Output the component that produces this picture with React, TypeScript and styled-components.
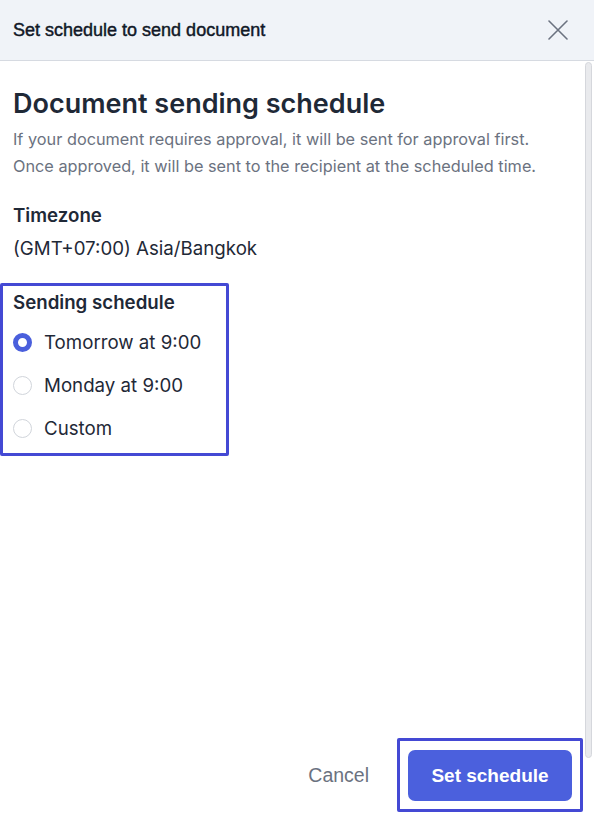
import { useState } from "react";
import styled, { createGlobalStyle } from "styled-components";

const GlobalStyle = createGlobalStyle`
  html, body {
    margin: 0;
    padding: 0;
    background: #ffffff;
  }
  body {
    font-family: Inter, "Noto Sans", "Liberation Sans", sans-serif;
    color: #1f2937;
  }
`;

const Dialog = styled.div`
  position: relative;
  height: 100vh;
  display: flex;
  flex-direction: column;
  background: #ffffff;
  overflow: hidden;
`;

const Header = styled.div`
  height: 60px;
  flex-shrink: 0;
  display: flex;
  align-items: center;
  justify-content: space-between;
  padding: 0 26px 0 13px;
  background: #f0f3f8;
  border-bottom: 1px solid #d6dae1;
`;

const HeaderTitle = styled.h2`
  margin: 0;
  font-family: "Liberation Sans", Arial, sans-serif;
  font-size: 18px;
  font-weight: 400;
  -webkit-text-stroke: 0.45px currentColor;
  color: #111827;
`;

const CloseButton = styled.button`
  border: none;
  background: transparent;
  padding: 0;
  width: 20px;
  height: 20px;
  display: flex;
  align-items: center;
  justify-content: center;
  color: #6b7280;
  cursor: pointer;
`;

const Body = styled.div`
  flex: 1;
  padding: 27px 13px 0 13px;
`;

const Title = styled.h1`
  margin: 0;
  font-size: 27px;
  line-height: 32px;
  font-weight: 600;
  color: #1f2937;
`;

const Desc = styled.p`
  margin: 6px 0 0;
  font-size: 16.3px;
  line-height: 27px;
  color: #6b7280;
`;

const Section = styled.div`
  margin-top: 23px;
`;

const Label = styled.div`
  font-size: 18.7px;
  line-height: 26px;
  font-weight: 600;
  color: #1f2937;
`;

const Value = styled.div`
  margin-top: 7px;
  font-size: 18.7px;
  line-height: 26px;
  color: #1f2937;
`;

const ScheduleGroup = styled.div`
  margin: 21px 0 0 -13px;
  width: fit-content;
  padding: 4px 25px 3px 10px;
  border: 3px solid #4449d4;
  border-radius: 2px;
`;

const GroupLabel = styled.div`
  font-size: 18.7px;
  line-height: 26px;
  font-weight: 600;
  color: #1f2937;
  margin-bottom: 5px;
`;

const Option = styled.label`
  height: 43px;
  display: flex;
  align-items: center;
  gap: 12px;
  font-size: 18.7px;
  color: #1f2937;
  cursor: pointer;
`;

const Radio = styled.span<{ checked: boolean }>`
  width: 19px;
  height: 19px;
  box-sizing: border-box;
  border-radius: 50%;
  background: #ffffff;
  border: ${(p) => (p.checked ? "5.5px solid #4a5fdc" : "1.5px solid #d1d5db")};
  flex-shrink: 0;
`;

const Footer = styled.div`
  flex-shrink: 0;
  display: flex;
  justify-content: flex-end;
  align-items: center;
  gap: 28px;
  padding: 0 11px 5px 0;
`;

const CancelButton = styled.button`
  border: none;
  background: transparent;
  font-family: "Liberation Sans", Arial, sans-serif;
  font-size: 19.5px;
  color: #6b7280;
  cursor: pointer;
  padding: 0;
`;

const Highlight = styled.div`
  padding: 9px 8px 8px;
  border: 3px solid #4449d4;
  border-radius: 2px;
`;

const PrimaryButton = styled.button`
  width: 164px;
  height: 51px;
  border: none;
  border-radius: 7px;
  background: #4b60dd;
  color: #ffffff;
  font-family: "Liberation Sans", Arial, sans-serif;
  font-size: 19px;
  font-weight: 700;
  cursor: pointer;
`;

const ScrollThumb = styled.div`
  position: absolute;
  right: 2px;
  top: 62px;
  width: 5px;
  height: 694px;
  border-radius: 4px;
  background: #e9eaed;
  border: 1px solid #d5d7dc;
`;

const options = ["Tomorrow at 9:00", "Monday at 9:00", "Custom"];

const App = () => {
  const [selected, setSelected] = useState(0);

  return (
    <Dialog>
      <GlobalStyle />
      <Header>
        <HeaderTitle>Set schedule to send document</HeaderTitle>
        <CloseButton aria-label="Close">
          <svg width="20" height="20" viewBox="0 0 20 20" fill="none">
            <path d="M1 1L19 19M19 1L1 19" stroke="currentColor" strokeWidth="1.6" strokeLinecap="round" />
          </svg>
        </CloseButton>
      </Header>
      <Body>
        <Title>Document sending schedule</Title>
        <Desc>
          If your document requires approval, it will be sent for approval first.
          <br />
          Once approved, it will be sent to the recipient at the scheduled time.
        </Desc>
        <Section>
          <Label>Timezone</Label>
          <Value>(GMT+07:00) Asia/Bangkok</Value>
        </Section>
        <ScheduleGroup>
          <GroupLabel>Sending schedule</GroupLabel>
          {options.map((opt, i) => (
            <Option key={opt} onClick={() => setSelected(i)}>
              <Radio checked={selected === i} />
              {opt}
            </Option>
          ))}
        </ScheduleGroup>
      </Body>
      <Footer>
        <CancelButton>Cancel</CancelButton>
        <Highlight>
          <PrimaryButton>Set schedule</PrimaryButton>
        </Highlight>
      </Footer>
      <ScrollThumb />
    </Dialog>
  );
};

export default App;
